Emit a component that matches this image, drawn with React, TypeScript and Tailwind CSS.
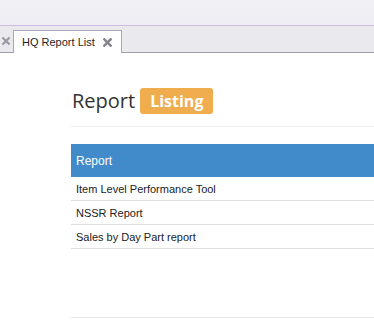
import React from 'react';

const reports = ['Item Level Performance Tool', 'NSSR Report', 'Sales by Day Part report'];

const CloseGlyph: React.FC<{ className?: string }> = ({ className }) => (
  <svg viewBox="0 0 8 8" className={className} fill="none" stroke="currentColor" strokeWidth={2.2} strokeLinecap="square">
    <path d="M1.2 1.2 L6.8 6.8 M6.8 1.2 L1.2 6.8" />
  </svg>
);

const App: React.FC = () => {
  return (
    <div className="w-[374px] h-[323px] overflow-hidden bg-white font-['Noto_Sans',sans-serif]">
      {/* window chrome */}
      <div className="h-[25px] bg-gradient-to-b from-[#f1f0f5] to-[#eeedf3]" />
      <div className="h-px bg-[#cdbde3]" />
      <div className="h-[27px] bg-[#e9e9ee] border-b border-[#9d9daa] flex items-end">
        <div className="h-[22px] w-[13px] flex items-center text-[#9a9aa3]">
          <CloseGlyph className="w-[8px] h-[8px] ml-[2px]" />
        </div>
        <div className="h-[23px] w-[109px] bg-white border border-b-0 border-[#a7a7b3] flex items-center pl-[8px] pr-[9px] -mb-px">
          <span className="text-[11px] text-[#1e1e1e] font-['Liberation_Sans',sans-serif]">HQ Report List</span>
          <CloseGlyph className="w-[9px] h-[9px] ml-auto text-[#85858f]" />
        </div>
      </div>

      {/* page */}
      <div className="ml-[71px]">
        <div className="flex items-center gap-[5px] pt-[34px] pb-[11px] border-b border-[#eeeeee]">
          <h1 className="text-[20px] leading-[28px] text-[#333] font-['Open_Sans',sans-serif] font-normal pl-px">Report</h1>
          <span className="bg-[#f0ad4e] text-white font-bold text-[16px] leading-[26px] px-[10px] rounded-[3px] font-['Open_Sans',sans-serif]">Listing</span>
        </div>

        <div className="mt-[17px]">
          <div className="h-[33px] bg-[#428bca] text-white text-[12px] flex items-center pl-[5px] font-['Liberation_Sans',sans-serif]">Report</div>
          {reports.map(r => (
            <div key={r} className="h-[24px] border-b border-[#dddddd] flex items-center pl-[5px] pt-[2px] text-[11px] text-[#222] font-['Liberation_Sans',sans-serif]">
              {r}
            </div>
          ))}
        </div>

        <div className="mt-[68px] border-b border-[#e5e5e5]" />
      </div>
    </div>
  );
};

export default App;
